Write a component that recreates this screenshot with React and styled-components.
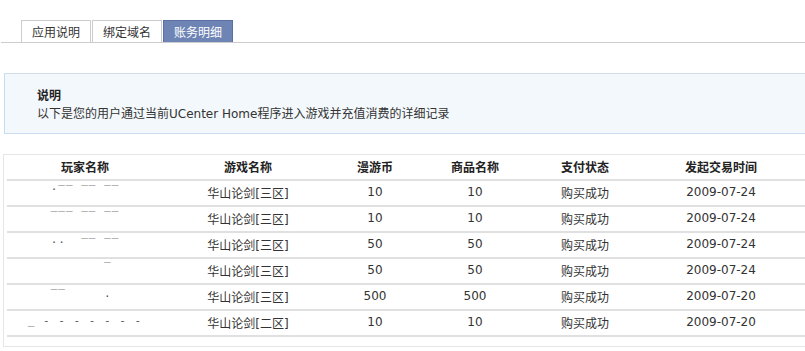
import styled, { createGlobalStyle } from "styled-components"

const GlobalStyle = createGlobalStyle`
    html, body {
        margin: 0;
        padding: 0;
        background: #fff;
        overflow: hidden;
    }
    body {
        font-family: "DejaVu Sans", "Noto Sans CJK SC", sans-serif;
        font-size: 12px;
        color: #333;
    }
`

const Page = styled.div`
    width: 805px;
    height: 351px;
    overflow: hidden;
`

const TabBar = styled.div`
    display: flex;
    gap: 1px;
    margin: 20px 0 0 1px;
    padding-left: 20px;
    border-bottom: 1px solid #cccccc;
`

const Tab = styled.div`
    height: 21px;
    line-height: 21px;
    padding: 0 10px;
    border: 1px solid ${props => props.active ? "#5a70a3" : "#cccccc"};
    border-bottom: none;
    background: ${props => props.active ? "#6d84b4" : "#fff"};
    color: ${props => props.active ? "#fff" : "#333"};
    font-family: "Noto Sans CJK SC", sans-serif;
    font-size: 12px;
`

const Notice = styled.div`
    margin: 30px -10px 0 4px;
    padding: 12px 0 9px 32px;
    background: #f3f8fc;
    border: 1px solid #c9ddf0;
    border-top-color: #cfdcea;
`

const NoticeTitle = styled.div`
    font-family: "Noto Sans CJK SC", sans-serif;
    font-weight: bold;
    font-size: 12px;
    line-height: 18px;
    color: #222;
`

const NoticeText = styled.div`
    font-size: 12px;
    line-height: 20px;
    color: #333;
`

const TableBox = styled.div`
    margin: 20px 0 0 3px;
    padding: 0 0 9px 3px;
    border: 1px solid #e6e6e6;
    border-right: none;
`

const Row = styled.div`
    display: grid;
    grid-template-columns: 156px 170px 84px 116px 104px 1fr;
    height: 24px;
    border-bottom: 2px solid #e0e0e0;
`

const Cell = styled.div`
    display: flex;
    align-items: center;
    justify-content: center;
    font-family: ${props => props.cjk ? '"Noto Sans CJK SC", sans-serif' : '"DejaVu Sans", "Noto Sans CJK SC", sans-serif'};
    font-weight: ${props => props.head ? "bold" : "normal"};
    font-size: 12px;
    color: ${props => props.head ? "#222" : "#333"};
    padding-bottom: 2px;
`

const Masked = styled.span`
    font-family: "DejaVu Sans Mono", monospace;
    font-size: 11px;
    letter-spacing: 1px;
    color: #555;
    white-space: pre;
    transform: translateY(${props => props.shift || 0}px);
`

const headers = ["玩家名称", "游戏名称", "漫游币", "商品名称", "支付状态", "发起交易时间"]

const rows = [
    { name: "·‾‾ ‾‾ ‾‾", shift: -3, game: "华山论剑[三区]", coins: 10, goods: 10, date: "2009-07-24" },
    { name: "‾‾‾ ‾‾ ‾‾", shift: -3, game: "华山论剑[三区]", coins: 10, goods: 10, date: "2009-07-24" },
    { name: "··  ‾‾ ‾‾", shift: -2, game: "华山论剑[三区]", coins: 50, goods: 50, date: "2009-07-24" },
    { name: "       ‾ ", shift: -4, game: "华山论剑[三区]", coins: 50, goods: 50, date: "2009-07-24" },
    { name: "‾‾     . ", shift: -3, game: "华山论剑[三区]", coins: 500, goods: 500, date: "2009-07-20" },
    { name: "_ - - - - - - -", shift: -2, game: "华山论剑[二区]", coins: 10, goods: 10, date: "2009-07-20" },
]

const App = () => {
    return (
        <Page>
            <GlobalStyle />
            <TabBar>
                <Tab>应用说明</Tab>
                <Tab>绑定域名</Tab>
                <Tab active>账务明细</Tab>
            </TabBar>

            <Notice>
                <NoticeTitle>说明</NoticeTitle>
                <NoticeText>以下是您的用户通过当前UCenter Home程序进入游戏并充值消费的详细记录</NoticeText>
            </Notice>

            <TableBox>
                <Row>
                    {headers.map(h => (
                        <Cell head cjk key={h}>{h}</Cell>
                    ))}
                </Row>
                {rows.map((r, i) => (
                    <Row key={i}>
                        <Cell><Masked shift={r.shift}>{r.name}</Masked></Cell>
                        <Cell>{r.game}</Cell>
                        <Cell>{r.coins}</Cell>
                        <Cell>{r.goods}</Cell>
                        <Cell cjk>购买成功</Cell>
                        <Cell>{r.date}</Cell>
                    </Row>
                ))}
            </TableBox>
        </Page>
    )
}

export default App
